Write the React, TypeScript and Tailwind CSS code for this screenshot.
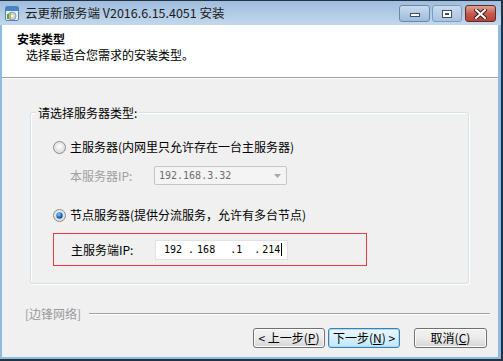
import React from "react";

function AppIcon() {
  return (
    <svg width="17" height="17" viewBox="0 0 17 17">
      <rect x="1.5" y="1.5" width="13" height="14" rx="1.5" fill="#e8f0f8" stroke="#5a7fa6" />
      <rect x="2" y="2" width="12" height="4" fill="#3f86d0" />
      <circle cx="8" cy="11" r="4" fill="#c9d6e2" stroke="#7c8da0" strokeWidth="0.8" />
      <circle cx="8" cy="11" r="1.2" fill="#fff" />
      <rect x="3" y="9" width="2" height="5" fill="#3dae3d" />
      <rect x="5.5" y="8" width="1.6" height="6" fill="#e0a020" />
    </svg>
  );
}

function Radio({ checked }: { checked?: boolean }) {
  return (
    <svg width="13" height="13" viewBox="0 0 13 13">
      <defs>
        <radialGradient id={checked ? "rc" : "ru"} cx="50%" cy="40%" r="60%">
          <stop offset="0%" stopColor="#ffffff" />
          <stop offset="100%" stopColor="#d6d6d6" />
        </radialGradient>
        <radialGradient id="dot" cx="40%" cy="35%" r="70%">
          <stop offset="0%" stopColor="#7fd0ff" />
          <stop offset="60%" stopColor="#1c6fc4" />
          <stop offset="100%" stopColor="#0e3f7a" />
        </radialGradient>
      </defs>
      <circle cx="6.5" cy="6.5" r="6" fill={checked ? "url(#rc)" : "url(#ru)"} stroke="#8c8c8c" />
      <circle cx="6.5" cy="6.5" r="4.5" fill="none" stroke="#e4e4e4" />
      {checked && <circle cx="6.5" cy="6.5" r="3.2" fill="url(#dot)" />}
    </svg>
  );
}

function WinButton({
  children,
  focused,
  width,
}: {
  children: React.ReactNode;
  focused?: boolean;
  width: string;
}) {
  return (
    <button
      className={
        focused
          ? `${width} h-[20px] rounded-[3px] border border-[#3c7fb1] bg-gradient-to-b from-[#eaf6fd] via-[#d9f0fc] to-[#bee6fd] shadow-[inset_0_0_0_1px_#a9dbf6] text-[12px] text-black flex items-center justify-center`
          : `${width} h-[20px] rounded-[3px] border border-[#707070] bg-gradient-to-b from-[#f2f2f2] via-[#ebebeb] to-[#d4d4d4] shadow-[inset_0_0_0_1px_#fcfcfc] text-[12px] text-black flex items-center justify-center`
      }
    >
      {children}
    </button>
  );
}

export default function App() {
  return (
    <div className="w-[503px] h-[361px] overflow-hidden bg-[#253140] pr-[2px] pb-[2px] pt-px font-['Noto_Sans_CJK_SC',sans-serif] text-[12px] text-black leading-none">
      <div className="w-full h-full bg-[#8cbbe4] flex flex-col pl-[2px] pr-[3px] pb-[2px]">
        {/* title bar */}
        <div className="h-[24px] -ml-[2px] -mr-[3px] bg-gradient-to-b from-[#9fbddd] to-[#c3d8ed] flex items-center pl-[4px] pr-[5px]">
          <AppIcon />
          <span className="ml-[4px] text-[12.5px] text-[#1b1b1b]">
            云更新服务端 V2016.6.15.4051 安装
          </span>
          <div className="ml-auto flex gap-[2px] items-start mt-[1px]">
            <div className="w-[31px] h-[17px] rounded-[3px] border border-[#6a86a8] bg-gradient-to-b from-[#c9dbee] to-[#9fbbdb] flex items-end justify-center pb-[4px]">
              <div className="w-[10px] h-[4px] bg-white border border-[#3d4f66]" />
            </div>
            <div className="w-[30px] h-[17px] rounded-[3px] border border-[#7f9cbd] bg-gradient-to-b from-[#c9dbee] to-[#a9c3df] flex items-center justify-center">
              <div className="w-[10px] h-[8px] bg-white border border-[#3d4f66] flex items-center justify-center">
                <div className="w-[4px] h-[2px] border border-[#3d4f66]" />
              </div>
            </div>
            <div className="w-[31px] h-[17px] ml-[1px] rounded-[3px] border border-[#5e2a2a] bg-gradient-to-b from-[#e0a195] via-[#c9594a] to-[#b8413a] flex items-center justify-center">
              <svg width="13" height="10" viewBox="0 0 13 10">
                <path d="M2 1 L11 9 M11 1 L2 9" stroke="#3a2020" strokeWidth="4" strokeLinecap="square" />
                <path d="M2 1 L11 9 M11 1 L2 9" stroke="#ffffff" strokeWidth="2" strokeLinecap="square" />
              </svg>
            </div>
          </div>
        </div>

        {/* header */}
        <div className="h-[53px] bg-white border-b border-[#a0a0a0] flex flex-col pl-[15px] pt-[7px]">
          <span className="font-bold text-[12px] leading-[14px]">安装类型</span>
          <span className="mt-[2px] pl-[9px] leading-[14px]">选择最适合您需求的安装类型。</span>
        </div>

        {/* body */}
        <div className="flex-1 bg-[#f0f0f0] border-t border-white flex flex-col">
          <div className="mt-[33px] ml-[28px] w-[439px] h-[172px] relative rounded-[3px] border border-[#d5dfe5] shadow-[inset_1px_1px_0_#ffffff,1px_1px_0_#ffffff] flex flex-col">
            <span className="absolute -top-[8px] left-[5px] bg-[#f0f0f0] px-[2px] leading-[16px]">
              请选择服务器类型:
            </span>

            <div className="mt-[26px] ml-[22px] h-[16px] flex items-center">
              <Radio />
              <span className="ml-[4px]">主服务器(内网里只允许存在一台主服务器)</span>
            </div>

            <div className="mt-[11px] ml-[39px] h-[19px] flex items-center">
              <span className="w-[84px] text-[#a0a0a0]">本服务器IP:</span>
              <div className="w-[133px] h-[19px] rounded-[2px] border border-[#c6c6c6] bg-[#f4f4f4] flex items-center pl-[4px] pr-[5px]">
                <span className="text-[#6d6d6d] font-['DejaVu_Sans_Mono',monospace] text-[10px]">
                  192.168.3.32
                </span>
                <svg className="ml-auto" width="7" height="4" viewBox="0 0 7 4">
                  <path d="M0 0 L7 0 L3.5 4 Z" fill="#a8a8a8" />
                </svg>
              </div>
            </div>

            <div className="mt-[22px] ml-[22px] h-[16px] flex items-center">
              <Radio checked />
              <span className="ml-[4px]">节点服务器(提供分流服务，允许有多台节点)</span>
            </div>

            <div className="mt-[10px] ml-[22px] w-[314px] h-[33px] border border-[#f03c3c] flex items-center pl-[17px]">
              <span className="w-[84px]">主服务端IP:</span>
              <div className="w-[133px] h-[20px] bg-white border border-[#e2e2e2] flex items-center pl-[8px] font-['DejaVu_Sans_Mono',monospace] text-[10px]">
                <span>192</span>
                <span className="ml-[6px]">.</span>
                <span className="ml-[3px]">168</span>
                <span className="ml-[15px]">.</span>
                <span>1</span>
                <span className="ml-[12px]">.</span>
                <span className="ml-[2px]">214</span>
                <span className="ml-px w-px h-[13px] bg-black" />
              </div>
            </div>
          </div>

          {/* footer */}
          <div className="mt-[22px] ml-[23px] mr-[8px] h-[16px] flex items-center">
            <span className="w-[60px] shrink-0 whitespace-nowrap text-[#9a9a9a]">[边锋网络]</span>
            <div className="ml-[4px] flex-1 h-[2px] border-t border-[#a0a0a0] border-b border-b-white" />
          </div>

          <div className="mt-[6px] pr-[11px] flex justify-end">
            <WinButton width="w-[72px]">
              &lt; 上一步(<u>P</u>)
            </WinButton>
            <div className="ml-[3px]">
              <WinButton width="w-[72px]" focused>
                下一步(<u>N</u>) &gt;
              </WinButton>
            </div>
            <div className="ml-[14px]">
              <WinButton width="w-[73px]">
                取消(<u>C</u>)
              </WinButton>
            </div>
          </div>
        </div>
      </div>
    </div>
  );
}
